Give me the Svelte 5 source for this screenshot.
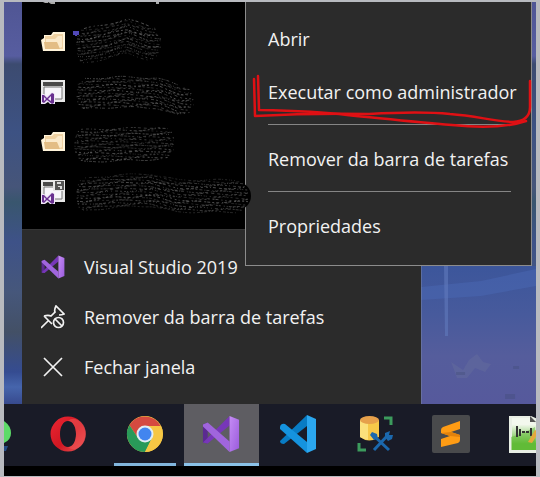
<script>
  // Pen strokes that hide the recent entries: centre line points and thickness.
  const recents = [
    { kind: 'folder', label: 'Pasta recente 1', h: 34, pts: [[10, 29], [32, 25], [54, 19], [76, 26]] },
    { kind: 'window', label: 'Projeto recente 1', h: 30, pts: [[10, 27], [44, 25], [84, 26], [108, 34]] },
    { kind: 'folder', label: 'Pasta recente 2', h: 32, pts: [[8, 29], [34, 28], [66, 27], [90, 26]] },
    { kind: 'saved', label: 'Projeto recente 2', h: 32, pts: [[10, 28], [44, 24], [78, 23], [104, 29], [164, 29]] }
  ];

  function centre(pts, x) {
    if (x <= pts[0][0]) return pts[0][1];
    for (let i = 1; i < pts.length; i++) {
      if (x <= pts[i][0]) {
        const [a, b] = [pts[i - 1], pts[i]];
        return a[1] + ((b[1] - a[1]) * (x - a[0])) / (b[0] - a[0]);
      }
    }
    return pts[pts.length - 1][1];
  }

  function grain(r, seed) {
    const lines = [];
    const start = r.pts[0][0];
    const end = r.pts[r.pts.length - 1][0];
    let s = seed * 977 + 31;
    const rnd = () => (s = (s * 16807) % 2147483647) / 2147483647;
    for (let i = 0; i < 9; i++) rnd();
    for (let o = -r.h / 2; o <= r.h / 2; o += 2) {
      const bulge = Math.sqrt(Math.max(0, 1 - (2 * o / r.h) ** 2)) * 13;
      let d = '';
      for (let x = start - bulge / 2; x <= end + bulge; x += 3) {
        const y = centre(r.pts, x) + o + Math.sin(x / 7 + o) * 0.8;
        d += `${d ? 'L' : 'M'}${x.toFixed(1)} ${y.toFixed(1)}`;
      }
      const dash = Array.from({ length: 14 }, () => 1 + Math.floor(rnd() * 3)).join(' ');
      lines.push({ d, dash, shift: Math.floor(rnd() * 20), o: 0.14 + rnd() * 0.18 });
    }
    return lines;
  }

  const grains = recents.map((r, i) => grain(r, i + 1));
</script>

{#snippet vsMark(id)}
  <svg class="vs" viewBox="0 0 40 40" aria-hidden="true">
    <defs>
      <linearGradient id={id} x1="0" y1="0" x2="1" y2="1">
        <stop offset="0" stop-color="#c58cf5" /><stop offset="1" stop-color="#9a5bdc" />
      </linearGradient>
    </defs>
    <path d="M1 10 6 8v22l-5-1z" fill="#5b2a91" />
    <path d="M1 29 29 1v10L6 30z" fill="#7737b8" />
    <path d="M1 10 6 8 29 28v11L1 12z" fill="#a065dd" />
    <path d="M29 1 39 5v30l-10 4z" fill="url(#{id})" />
  </svg>
{/snippet}

<main class="screen">
  <section class="desktop">
    <div class="jump">
      <div class="recent">
        <svg class="rest" viewBox="0 0 130 3" aria-hidden="true">
          <path d="M2 0h5v1H4zM7 0h7v2h-4zM115 0h3v2h-3z" fill="#aaa" />
        </svg>
        {#each recents as r, i}
          <button class="row" aria-label={r.label}>
            <svg class="glyph" viewBox="0 0 24 24" aria-hidden="true">
              {#if r.kind === 'folder'}
                <path d="M0 10 3 8V5h7l2-3h12v19H2z" fill="#fff4da" />
                <path d="M4 6h7l2-2h9v15H4z" fill="#f0d2a2" />
                <path d="M5 9h9l3-3h4v11l-4 2H5z" fill="#fbeacb" />
                <path d="M3 12h13l3 7H4z" fill="#e3bd85" />
              {:else}
                <path d="M0 0h24v22H0z" fill="#e8e8e8" />
                <path d="M2 2h20v4H2z" fill="#4a4a4a" />
                <path d="M3 7h18v12H3z" fill="#f7f6fa" stroke="#777" />
                {#if r.kind === 'saved'}
                  <path d="M12 0h12v11H12z" fill="#e8e8e8" />
                  <path d="M14 1h9v9h-9z" fill="#555" />
                  <path d="M16 2h4v2h-4zM17 6h4v3h-2V7h-2z" fill="#ddd" />
                {/if}
                <path d="M0 14h3l3 2 5-4 3 2v10l-4 1-3-3-3 2H0z" fill="#eee5f6" />
                <path d="m1 15 2 0 3 3 5-5 2 1v9l-2 1-5-4-3 3-2-1zM3 17v4l2-2zM10 16l-3 3 3 2z" fill="#68308f" fill-rule="evenodd" />
              {/if}
            </svg>
            <svg class="ink" viewBox="0 0 180 50" aria-hidden="true">
              <path d={'M' + r.pts.map((p) => p.join(' ')).join('L')} fill="none" stroke="#000" stroke-width={r.h - 4} stroke-linecap="round" stroke-linejoin="round" />
              {#each grains[i] as g}
                <path d={g.d} fill="none" stroke="#fff" stroke-width="1" stroke-dasharray={g.dash} stroke-dashoffset={g.shift} opacity={g.o} />
              {/each}
              {#if i === 0}<path d="M1 18V15h4v2H3v2" fill="none" stroke="#5148b8" stroke-width="2" />{/if}
            </svg>
          </button>
        {/each}
      </div>
      <div class="tasks">
        <button class="row">
          <span class="slot">{@render vsMark('vsSmall')}</span>Visual Studio 2019
        </button>
        <button class="row">
          <svg class="glyph" viewBox="0 0 24 24" fill="none" stroke="#f2f2f2" stroke-width="1.7" aria-hidden="true">
            <path d="M0 23 8 15M3 11l8 8M3 11c3-1 5-1 7 0l4-4c-1-2 0-4 1-6l8 8c-2 1-3 1-5 1" />
            <circle cx="17.5" cy="17.5" r="5" /><path d="m14 14 7 7" />
          </svg>Remover da barra de tarefas
        </button>
        <button class="row">
          <svg class="glyph" viewBox="0 0 24 24" fill="none" stroke="#f2f2f2" stroke-width="1.7" aria-hidden="true">
            <path d="m3 3 18 18M21 3 3 21" />
          </svg>Fechar janela
        </button>
      </div>
    </div>

    <svg class="wall" viewBox="0 0 115 138" preserveAspectRatio="none" aria-hidden="true">
      <defs>
        <linearGradient id="sky" x1="0" y1="0" x2="0" y2="1">
          <stop offset="0" stop-color="#3c569b" /><stop offset=".35" stop-color="#475a9c" />
          <stop offset=".65" stop-color="#555d9c" /><stop offset="1" stop-color="#56599c" />
        </linearGradient>
      </defs>
      <path d="M0 0h115v138H0z" fill="url(#sky)" />
      <path d="M0 21 60 15 115 3v17L60 30 0 34z" fill="#4a68b4" opacity=".5" />
      <path d="M23 0h4v70h-3z" fill="#6179bc" opacity=".6" />
      <path d="m30 96 12 8 6-10 8-6 6 8 8 2-6 8-10-4-8 10-10 0z" fill="#6b729f" opacity=".35" />
      <path d="M35 106h9v3h-9zM92 100h6v3h-6zM84 128h10v5H84z" fill="#3f4a75" opacity=".35" />
      <path d="M0 0v138" stroke="#7883a6" />
    </svg>

    <div class="menu">
      <button>Abrir</button>
      <button>Executar como administrador</button>
      <hr />
      <button>Remover da barra de tarefas</button>
      <hr />
      <button>Propriedades</button>
      <svg class="mark" viewBox="0 0 287 264" aria-hidden="true">
        <g fill="none" stroke="#df1014" stroke-width="2.5" stroke-linecap="round" stroke-linejoin="round">
          <path d="M9 77 10 114Q66 111 124 112Q175 109 205 112C232 114 247 119 268 120Q285 119 285 105L285 79" />
          <path d="M13 74 14 108Q72 109 102 113C143 117 170 120 207 123Q254 128 281 119" />
        </g>
      </svg>
    </div>
  </section>

  <nav class="taskbar" aria-label="Barra de tarefas">
    <button class="app" aria-label="WhatsApp">
      <svg class="edge" viewBox="0 0 8 38" aria-hidden="true">
        <path d="M0 6q7 5 7 12T0 28z" fill="#5ddb68" /><path d="M0 31h4l-2 5H0z" fill="#244b84" />
      </svg>
    </button>
    <button class="app" aria-label="Opera">
      <svg viewBox="0 0 38 38" aria-hidden="true">
        <defs>
          <linearGradient id="opera" x1="0" y1="0" x2="1" y2="1"><stop offset="0" stop-color="#ed2633" /><stop offset=".55" stop-color="#cf1722" /><stop offset="1" stop-color="#f05c5c" /></linearGradient>
        </defs>
        <path d="M19 1.500a17.500 17.500 0 1 0 0 35 17.500 17.500 0 1 0 0-35zM19 6c5 0 8 6 8 13s-3 13-8 13-8-6-8-13 3-13 8-13z" fill="url(#opera)" fill-rule="evenodd" />
        <path d="M19 6c4-4 9-2 13 1a17 17 0 0 1 0 24c-4 3-9 5-13 1 5 0 8-6 8-13s-3-13-8-13z" fill="#ef5153" opacity=".6" />
      </svg>
    </button>
    <button class="app open" aria-label="Google Chrome">
      <svg viewBox="0 0 38 38" aria-hidden="true">
        <circle cx="19" cy="19" r="18" fill="#f6c744" />
        <path d="M3.400 10A18 18 0 0 1 34.600 11L19 11 12 23z" fill="#d54a40" />
        <path d="M3.400 10A18 18 0 0 0 19 37L26 23 12 23z" fill="#299a59" />
        <path d="M19 11h16a18 18 0 0 1-16 26l7-14z" fill="#f6c744" />
        <circle cx="19" cy="19" r="8.500" fill="#e2edf3" /><circle cx="19" cy="19" r="6.500" fill="#4285ef" />
      </svg>
    </button>
    <button class="app active" aria-label="Visual Studio 2019">{@render vsMark('vsBig')}</button>
    <button class="app" aria-label="Visual Studio Code">
      <svg viewBox="0 0 38 38" aria-hidden="true">
        <path d="M1 26 28 0v11L5 29q-4 0-4-3z" fill="#087cc4" />
        <path d="M1 12q1-4 5-3l22 18v11L1 14z" fill="#1593de" />
        <path d="m28 0 9 4v30l-9 4z" fill="#2ba7ef" />
      </svg>
    </button>
    <button class="app" aria-label="Ferramentas de banco de dados">
      <svg viewBox="0 0 38 38" aria-hidden="true">
        <path d="M28 3h7v7M3 28v7h7" fill="none" stroke="#3c9b5d" stroke-width="3" />
        <path d="M4 5v17q9 7 19 0V5z" fill="#f6c849" /><path d="M4 5v17q3 2 8 3V7z" fill="#fbe07c" />
        <ellipse cx="13.500" cy="5" rx="9.500" ry="4" fill="#e6a04b" />
        <path d="m17 20 16 15M32 20 18 35" stroke="#1b68ad" stroke-width="3" />
        <path d="m14 20 2-3 5 2 1 5-4 1zM29 22l0-4 5-2-1 4 4 0-1 4-4 2z" fill="#1b68ad" />
      </svg>
    </button>
    <button class="app" aria-label="Sublime Text">
      <svg viewBox="0 0 38 38" aria-hidden="true">
        <rect width="38" height="38" rx="2" fill="#494a4c" />
        <path d="M9 15q0-2 2-3l17-6v8l-9 3 9 3v5q0 2-2 3L9 32v-8l9-3-9-3z" fill="#ff9c14" />
        <path d="m9 18 10-1 9 3v2l-10-1z" fill="#e2820c" />
      </svg>
    </button>
    <button class="app" aria-label="Notepad++">
      <svg viewBox="0 0 38 38" aria-hidden="true">
        <defs><linearGradient id="pad" x1="0" y1="0" x2="0" y2="1"><stop offset=".2" stop-color="#f3f8ee" /><stop offset=".8" stop-color="#61bd37" /></linearGradient></defs>
        <path d="M0 1h22l16 7v30H0z" fill="#e9efe5" /><path d="M3 3h18l5 6h12v26H3z" fill="url(#pad)" />
        <path d="M2 35V22q12-3 24-10v23z" fill="#61b938" opacity=".5" />
        <path d="M8 11v11M11 14v7M13 17h3M17 17h3M22 13v8" stroke="#333" stroke-width="2" />
        <path d="m19 27 7-12 4 2-7 11z" fill="#e3a93c" /><path d="M21 1v6h6z" fill="#555" />
      </svg>
    </button>
  </nav>
</main>

<style>
  :global(body) { background: #000; }
  .screen {
    border: solid #b8babf;
    border-width: 2px 4px 1px;
    padding-bottom: 10px;
    background: #000;
    overflow: hidden;
    font: 18px/24px "Open Sans", "Noto Sans", sans-serif;
    color: #f2f2f2;
  }
  button {
    appearance: none;
    border: 0;
    padding: 0;
    margin: 0;
    background: none;
    color: inherit;
    font: inherit;
    text-align: left;
    white-space: nowrap;
  }
  svg { display: block; flex: none; }
  .desktop {
    position: relative;
    display: flex;
    align-items: flex-end;
    padding-left: 18px;
    background: linear-gradient(#505694 0, #575da0 54px, #3c4b70 62px, #3d5283 130px, #465579 185px, #39566e 200px, #3e5288 240px, #46577b 290px, #435066 330px, #354c91 370px, #4665ac 385px, #374a8e 402px);
  }
  .jump { width: calc(78% - 2px); background: #2b2b2b; }
  .recent { position: relative; background: #000; padding: 15px 0 12px; border-bottom: 1px solid #363636; }
  .rest { position: absolute; top: 0; left: 19px; width: 130px; height: 3px; }
  .row { display: flex; align-items: center; gap: 19px; width: 100%; height: 50px; padding-left: 19px; }
  .recent .row { gap: 8px; }
  .glyph, .slot { width: 24px; height: 24px; flex: none; }
  .slot .vs { width: 24px; height: 24px; }
  .ink { position: relative; z-index: 1; width: 180px; height: 50px; overflow: visible; }
  .tasks { padding: 12px 0; }
  .wall { flex: 1; min-width: 0; height: 138px; }
  .menu {
    position: absolute;
    top: 0;
    right: 4px;
    width: 287px;
    box-sizing: border-box;
    padding: 10px 20px 13px 22px;
    background: #2b2b2b;
    border: 1px solid #8c8c8c;
    border-top: 0;
  }
  .menu button { display: block; width: 100%; height: 53px; }
  .menu hr { height: 1px; margin: 6px 0 7px; border: 0; background: #858585; }
  .mark { position: absolute; top: 0; left: -1px; width: 287px; height: 264px; pointer-events: none; }
  .taskbar {
    display: grid;
    grid-template-columns: 25px repeat(7, 1fr);
    gap: 2px;
    height: 62px;
    margin-right: -29px;
    background: #191b27;
  }
  .app { display: flex; align-items: center; justify-content: center; box-sizing: border-box; border-bottom: 3px solid transparent; }
  .app svg { width: 38px; height: 38px; }
  .app .edge { width: 8px; margin-right: auto; }
  .open { margin: 0 6px; border-color: #81b5dc; }
  .active { background: #5e5d62; border-color: #8bc2e8; }
</style>
